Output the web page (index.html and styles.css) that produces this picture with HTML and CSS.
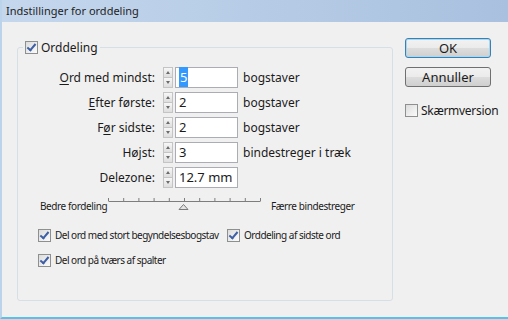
FILE: index.html
```html
<!DOCTYPE html>
<html lang="da">
<head>
  <meta charset="UTF-8">
  <meta name="viewport" content="width=device-width, initial-scale=1.0">
  <title>Indstillinger for orddeling</title>
  <link rel="stylesheet" href="styles.css">
</head>
<body>
  <div class="window">
    <div class="titlebar">Indstillinger for orddeling</div>

    <div class="client">
      <fieldset class="group">
        <legend class="group-legend">
          <span class="check checked"></span>Orddeling
        </legend>

        <div class="rows">
          <label class="label"><u>O</u>rd med mindst:</label>
          <span class="spin"><i class="up"></i><i class="down"></i></span>
          <span class="field"><span class="sel">5</span></span>
          <span class="unit">bogstaver</span>

          <label class="label"><u>E</u>fter første:</label>
          <span class="spin"><i class="up"></i><i class="down"></i></span>
          <span class="field">2</span>
          <span class="unit">bogstaver</span>

          <label class="label">F<u>ø</u>r sidste:</label>
          <span class="spin"><i class="up"></i><i class="down"></i></span>
          <span class="field">2</span>
          <span class="unit">bogstaver</span>

          <label class="label">Højst:</label>
          <span class="spin"><i class="up"></i><i class="down"></i></span>
          <span class="field">3</span>
          <span class="unit">bindestreger i træk</span>

          <label class="label">Delezone:</label>
          <span class="spin"><i class="up"></i><i class="down"></i></span>
          <span class="field">12.7 mm</span>
          <span class="unit"></span>
        </div>

        <div class="slider-row">
          <span class="slider-label left">Bedre fordeling</span>
          <svg class="slider" width="153" height="17" viewBox="0 0 153 17">
            <path d="M0.5 5.5H152.5" stroke="#7d7d7d" fill="none"/>
            <path d="M0.5 2V5M15.7 2V5M30.9 2V5M46.1 2V5M61.3 2V5M76.5 2V5M91.7 2V5M106.9 2V5M122.1 2V5M137.3 2V5M152.5 2V5" stroke="#7d7d7d" fill="none"/>
            <path d="M75.5 8.5L80 13.5H71Z" fill="#e4e4e4" stroke="#7a7a7a"/>
          </svg>
          <span class="slider-label right">Færre bindestreger</span>
        </div>

        <div class="opt-row">
          <span class="opt wide"><span class="check checked"></span>Del ord med stort begyndelsesbogstav</span>
          <span class="opt"><span class="check checked"></span>Orddeling af sidste ord</span>
        </div>
        <div class="opt-row">
          <span class="opt"><span class="check checked"></span>Del ord på tværs af spalter</span>
        </div>
      </fieldset>

      <div class="side">
        <button class="btn default">OK</button>
        <button class="btn">Annuller</button>
        <span class="side-opt"><span class="check"></span>Skærmversion</span>
      </div>
    </div>
  </div>
</body>
</html>
```

FILE: styles.css
```css
body {
  margin: 0;
  font-family: 'Noto Sans', 'Open Sans', sans-serif;
  font-size: 12px;
  color: #1b1b1b;
  background: #f0f0f0;
}

.window {
  width: 508px;
  height: 319px;
  box-sizing: border-box;
  border-left: 2px solid #bcd3ec;
  border-bottom: 2px solid #4fc5ee;
  background: #f0f0f0;
  overflow: hidden;
}

.titlebar {
  height: 22px;
  line-height: 21px;
  padding-left: 4px;
  font-size: 11px;
  color: #1e1e1e;
  background: linear-gradient(to right, #c4d7ed, #a9c1df);
}

.client {
  display: flex;
  align-items: flex-start;
  padding: 16px 0 0 15px;
}

.group {
  margin: 1px 0 0 0;
  padding: 12px 0 0 0;
  width: 376px;
  height: 262px;
  box-sizing: border-box;
  border: 1px solid #d5dfe5;
  border-radius: 3px;
}

.group-legend {
  display: flex;
  align-items: center;
  margin-left: 5px;
  padding: 0 2px;
  height: 16px;
  font-size: 12px;
}

.group-legend .check {
  margin-right: 3px;
}

.rows {
  display: grid;
  grid-template-columns: 137px 18px 65px auto;
  justify-content: start;
  grid-auto-rows: 21px;
  row-gap: 4px;
  align-items: center;
  font-size: 12px;
}

.label {
  text-align: right;
}

.label u {
  text-underline-offset: 2px;
}

.spin {
  display: flex;
  flex-direction: column;
  width: 10px;
  height: 21px;
  margin-left: 8px;
}

.spin i {
  flex: 1;
  position: relative;
  box-sizing: border-box;
  border: 1px solid #c4c4c4;
  background: linear-gradient(#f7f7f7, #dedede);
}

.spin i + i {
  border-top: none;
}

.spin i::after {
  content: '';
  position: absolute;
  left: 2px;
  border-left: 2px solid transparent;
  border-right: 2px solid transparent;
}

.spin .up::after {
  top: 3px;
  border-bottom: 3px solid #6b6b6b;
}

.spin .down::after {
  top: 3px;
  border-top: 3px solid #6b6b6b;
}

.field {
  display: block;
  width: 63px;
  height: 21px;
  box-sizing: border-box;
  margin-left: 2px;
  padding-left: 3px;
  line-height: 19px;
  border: 1px solid #abadb3;
  background: #fff;
  font-size: 13px;
}

.sel {
  background: #3399ff;
  color: #fff;
  padding: 1px 1px;
}

.unit {
  margin-left: 5px;
}

.slider-row {
  display: flex;
  align-items: flex-end;
  height: 17px;
  margin-top: 8px;
  padding-left: 22px;
}

.slider-label {
  font-size: 10px;
  letter-spacing: -0.4px;
  line-height: 13px;
  white-space: nowrap;
}

.slider-label.left {
  width: 68px;
}

.slider {
  display: block;
  margin: 0 10px 0 0;
}

.opt-row {
  display: flex;
  align-items: center;
  height: 14px;
  padding-left: 20px;
  margin-top: 15px;
}

.opt-row + .opt-row {
  margin-top: 11px;
}

.opt {
  display: flex;
  align-items: center;
  font-size: 10px;
  letter-spacing: -0.5px;
  white-space: nowrap;
}

.opt.wide {
  width: 189px;
  flex: none;
}

.opt .check,
.side-opt .check {
  margin-right: 4px;
}

.check {
  display: inline-block;
  width: 13px;
  height: 13px;
  box-sizing: border-box;
  border: 1px solid #8e8f8f;
  background: linear-gradient(135deg, #dcdcdc, #fbfbfb);
  position: relative;
  flex: none;
}

.check.checked::after {
  content: '';
  position: absolute;
  left: 3px;
  top: 0px;
  width: 3px;
  height: 7px;
  border-right: 2px solid #3d5fa5;
  border-bottom: 2px solid #3d5fa5;
  transform: rotate(40deg);
}

.side {
  display: flex;
  flex-direction: column;
  margin-left: 12px;
}

.btn {
  width: 86px;
  height: 20px;
  margin: 0 0 9px 0;
  padding: 0;
  font-family: inherit;
  font-size: 13px;
  color: #1b1b1b;
  border: 1px solid #707070;
  border-radius: 3px;
  background: linear-gradient(#f2f2f2 0%, #ebebeb 50%, #dddddd 51%, #cfcfcf 100%);
}

.btn.default {
  border-color: #3c7fb1;
  box-shadow: inset 0 0 0 1px #a4d9f4;
}

.side-opt {
  display: flex;
  align-items: center;
  margin-top: 6px;
  font-size: 12px;
  letter-spacing: -0.3px;
  white-space: nowrap;
}

.side-opt .check {
  margin-right: 3px;
}
```
